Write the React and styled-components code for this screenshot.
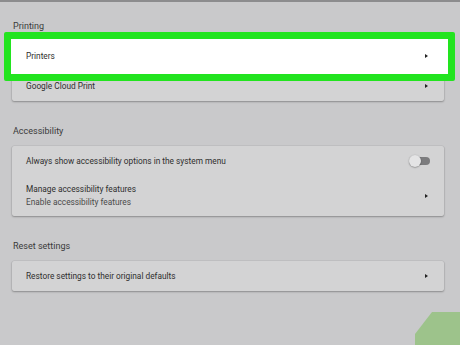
import React from 'react';
import styled, { createGlobalStyle } from 'styled-components';

const GlobalStyle = createGlobalStyle`
  html, body {
    margin: 0;
    padding: 0;
    background: #c9c9cb;
    overflow: hidden;
  }
  body {
    font-family: Roboto, "Liberation Sans", sans-serif;
    color: #333;
  }
`;

const Page = styled.div`
  position: relative;
  width: 460px;
  height: 345px;
  box-sizing: border-box;
  border-top: 2px solid #8c8c8e;
  padding: 14px 16px 0 12px;
  display: flex;
  flex-direction: column;
  gap: 20px;
  overflow: hidden;
`;

const Section = styled.section`
  display: flex;
  flex-direction: column;
  gap: 5px;
`;

const SectionTitle = styled.div`
  height: 20px;
  line-height: 20px;
  font-size: 9px;
  padding-left: 1px;
  color: #3a3a3a;
`;

const Card = styled.div`
  background: #d3d3d4;
  border-radius: 2px;
  box-shadow: 0 1px 2px rgba(0, 0, 0, 0.28), 0 0 0 0.5px rgba(0, 0, 0, 0.08);
`;

const Row = styled.div`
  position: relative;
  display: flex;
  align-items: center;
  justify-content: space-between;
  height: ${p => p.$tall ? 40 : 30}px;
  padding: 0 17px 0 14px;
  box-sizing: border-box;
`;

const Highlight = styled.span`
  position: absolute;
  top: -9px;
  left: -8px;
  right: -11px;
  bottom: -10px;
  border: 7px solid #22e41f;
  border-radius: 2px;
  background: #fff;
  z-index: 0;
`;

const Label = styled.div`
  position: relative;
  z-index: 1;
  font-size: 8.3px;
  line-height: 13px;
  color: #2e2e2e;
`;

const Sub = styled.div`
  color: #4a4a4a;
`;

const Arrow = styled.span`
  position: relative;
  z-index: 1;
  width: 0;
  height: 0;
  border-top: 2.5px solid transparent;
  border-bottom: 2.5px solid transparent;
  border-left: 3.5px solid #222;
  margin-right: -1px;
`;

const Toggle = styled.span`
  position: relative;
  width: 18px;
  height: 8px;
  margin-right: -3px;
  border-radius: 4px;
  background: #7c7c7e;
`;

const Knob = styled.span`
  position: absolute;
  left: -3px;
  top: -2px;
  width: 12px;
  height: 12px;
  border-radius: 50%;
  background: #e4e4e5;
  box-shadow: 0 0.5px 1.5px rgba(0, 0, 0, 0.45);
`;

const Badge = styled.div`
  position: absolute;
  right: 0;
  bottom: 0;
  width: 45px;
  height: 33px;
  background: #9dc38b;
  clip-path: polygon(17px 0, 45px 0, 45px 33px, 0 33px, 0 22px);
`;

const sections = [
  {
    title: 'Printing',
    rows: [
      { label: 'Printers', highlight: true },
      { label: 'Google Cloud Print' },
    ],
  },
  {
    title: 'Accessibility',
    rows: [
      { label: 'Always show accessibility options in the system menu', toggle: true },
      { label: 'Manage accessibility features', sub: 'Enable accessibility features' },
    ],
  },
  {
    title: 'Reset settings',
    rows: [{ label: 'Restore settings to their original defaults' }],
  },
];

export default function App() {
  return (
    <>
      <GlobalStyle />
      <Page>
        {sections.map(s => (
          <Section key={s.title}>
            <SectionTitle>{s.title}</SectionTitle>
            <Card>
              {s.rows.map(r => (
                <Row key={r.label} $tall={!!r.sub}>
                  {r.highlight && <Highlight />}
                  <Label>
                    {r.label}
                    {r.sub && <Sub>{r.sub}</Sub>}
                  </Label>
                  {r.toggle ? (
                    <Toggle><Knob /></Toggle>
                  ) : (
                    <Arrow />
                  )}
                </Row>
              ))}
            </Card>
          </Section>
        ))}
        <Badge />
      </Page>
    </>
  );
}
